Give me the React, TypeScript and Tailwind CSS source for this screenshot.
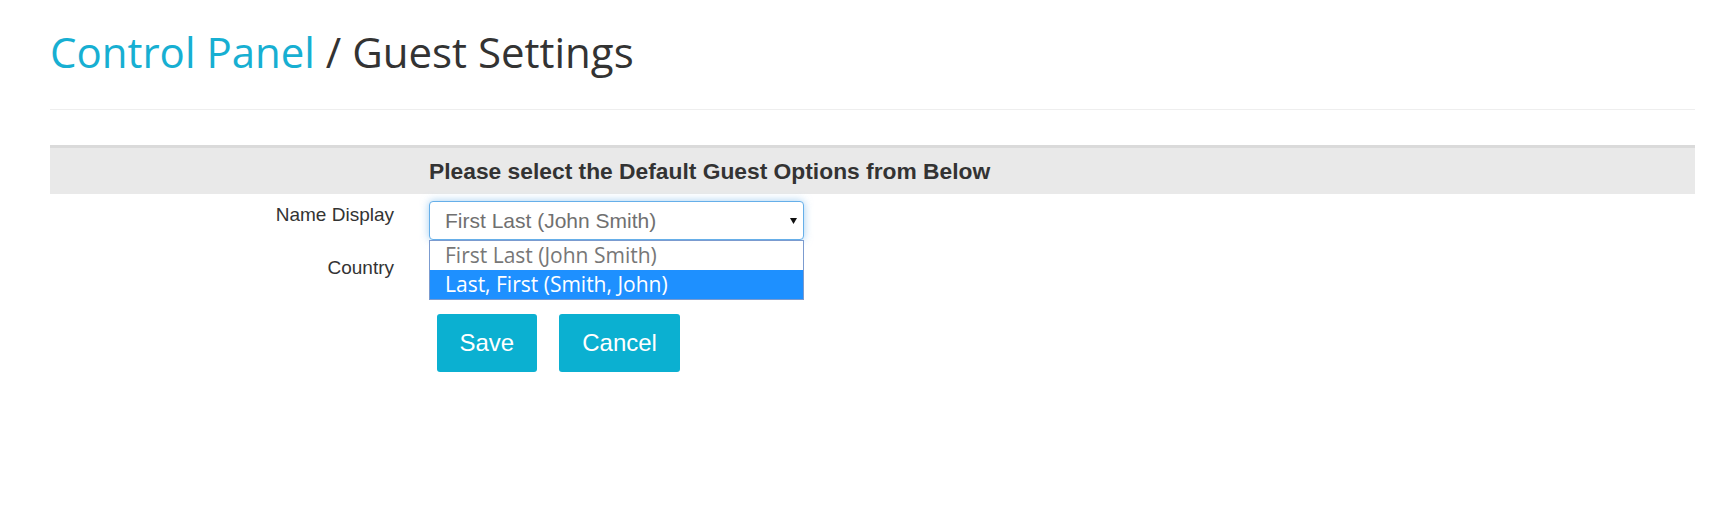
import React from "react";

const options = ["First Last (John Smith)", "Last, First (Smith, John)"];

function FormRow({ label, children }: { label: string; children?: React.ReactNode }) {
  return (
    <div className="grid grid-cols-[344px_375px] gap-x-[35px]">
      <label className="pt-[1px] text-right text-[19px] leading-[26px] text-[#333]">{label}</label>
      <div className="relative">{children}</div>
    </div>
  );
}

export default function App() {
  const selected = 0;
  const highlighted = 1;

  return (
    <div className="min-h-[515px] bg-white pl-[50px] pr-[25px] font-['Liberation_Sans',Arial,sans-serif]">
      {/* Page title */}
      <h1 className="pt-[29px] text-[42px] leading-[46px] font-normal font-['Open_Sans',sans-serif] text-[#333]">
        <span className="text-[#17afd2]">Control Panel</span> / Guest Settings
      </h1>
      <hr className="mt-[34px] border-t border-[#eee]" />

      {/* Options header band */}
      <div className="mt-[35px] h-[49px] border-t-[3px] border-[#dadada] bg-[#e9e9e9] flex items-center">
        <div className="pl-[379px] text-[22.8px] font-bold text-[#333]">
          Please select the Default Guest Options from Below
        </div>
      </div>

      <div className="mt-[7px] flex flex-col gap-[14px]">
        <FormRow label="Name Display">
          <div className="h-[39px] rounded-[4px] border border-[#66afe9] shadow-[0_0_8px_rgba(102,175,233,0.6)] bg-white flex items-center justify-between pl-[15px] pr-[6px]">
            <span className="text-[21px] text-[#707070]">{options[selected]}</span>
            <svg width="7" height="6" viewBox="0 0 7 6">
              <path d="M0 0H7L3.5 6Z" fill="#111" />
            </svg>
          </div>
          {/* open native dropdown list */}
          <div className="absolute left-0 top-[39px] z-10 w-full border border-[#7b9bcf] bg-white font-['Open_Sans',sans-serif] text-[21px]">
            {options.map((opt, i) => (
              <div
                key={opt}
                className={`h-[29px] leading-[29px] pl-[15px] ${
                  i === highlighted ? "bg-[#1e90ff] text-white" : "text-[#777]"
                }`}
              >
                {opt}
              </div>
            ))}
          </div>
        </FormRow>
        <FormRow label="Country">
          <div className="h-[39px]" />
        </FormRow>
      </div>

      <div className="mt-[21px] ml-[387px] flex gap-[22px]">
        <button className="h-[58px] px-[22.5px] rounded-[3px] bg-[#0bb0d1] text-white text-[24px]">Save</button>
        <button className="h-[58px] px-[23.5px] rounded-[3px] bg-[#0bb0d1] text-white text-[24px]">Cancel</button>
      </div>
    </div>
  );
}
